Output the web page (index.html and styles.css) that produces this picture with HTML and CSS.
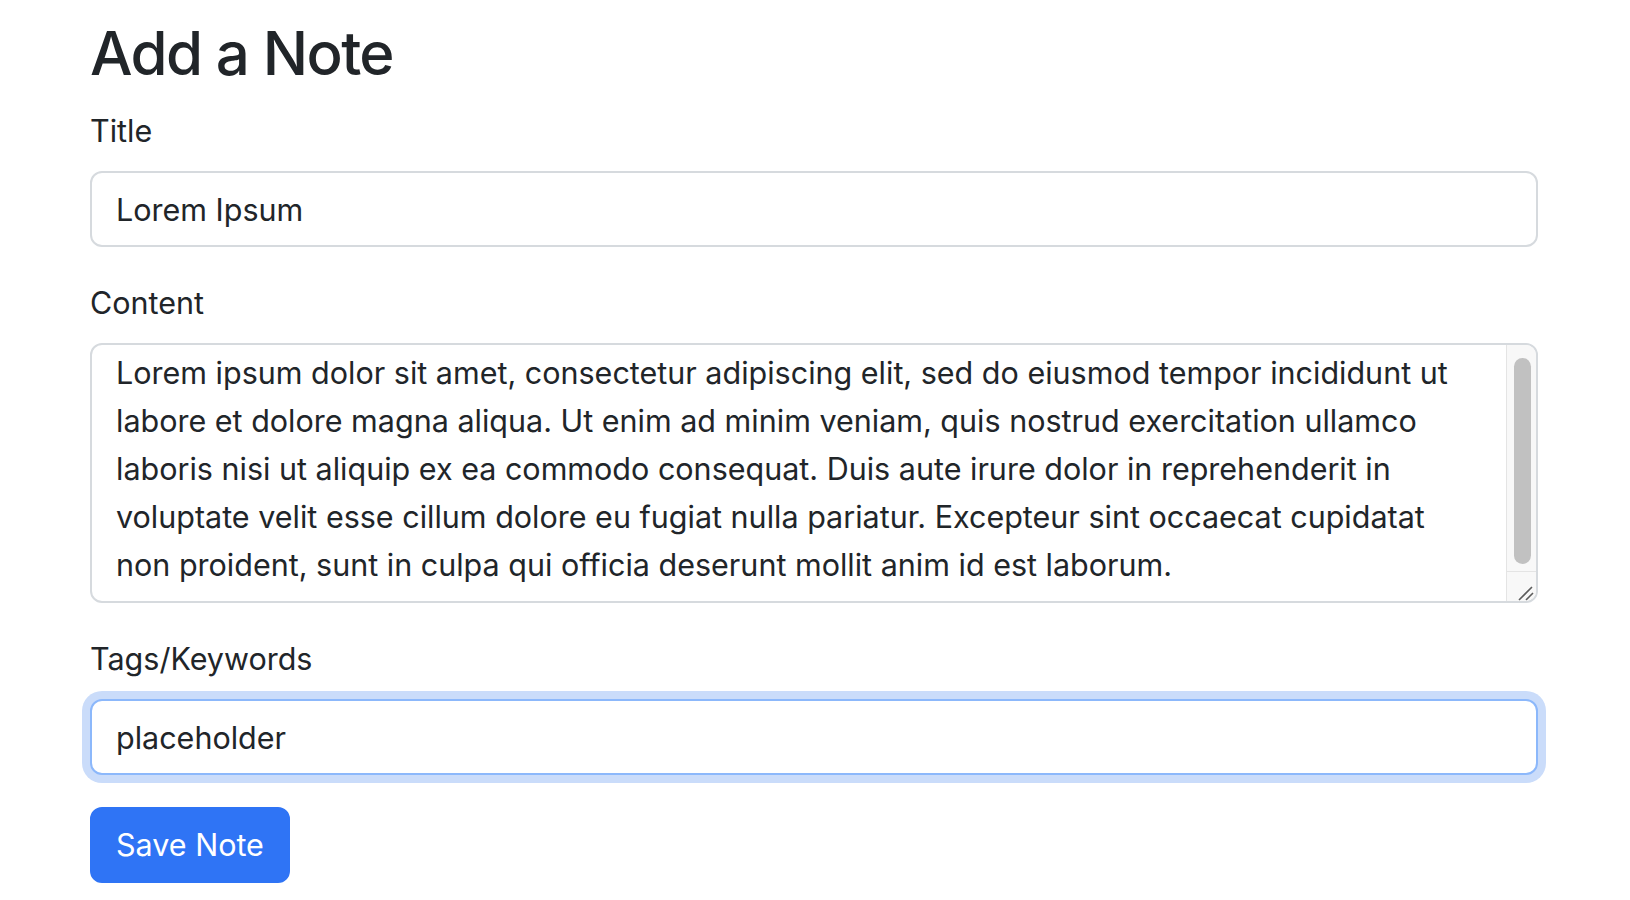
FILE: index.html
```html
<!DOCTYPE html>
<html lang="en">
<head>
<meta charset="utf-8">
<title>Add a Note</title>
<link rel="stylesheet" href="styles.css">
</head>
<body>
<main class="page">
  <h1 class="page-title">Add a Note</h1>
  <form class="note-form">
    <div class="field">
      <label class="field-label" for="title">Title</label>
      <input class="field-control" id="title" type="text" value="Lorem Ipsum">
    </div>
    <div class="field">
      <label class="field-label" for="content">Content</label>
      <div class="area-box">
        <textarea class="area-input" id="content">Lorem ipsum dolor sit amet, consectetur adipiscing elit, sed do eiusmod tempor incididunt ut labore et dolore magna aliqua. Ut enim ad minim veniam, quis nostrud exercitation ullamco laboris nisi ut aliquip ex ea commodo consequat. Duis aute irure dolor in reprehenderit in voluptate velit esse cillum dolore eu fugiat nulla pariatur. Excepteur sint occaecat cupidatat non proident, sunt in culpa qui officia deserunt mollit anim id est laborum.</textarea>
        <div class="area-scroll" aria-hidden="true">
          <div class="scroll-track"><div class="scroll-thumb"></div></div>
          <div class="scroll-resizer">
            <svg width="29" height="30" viewBox="0 0 29 30">
              <path d="M12 28 L25 15 M19 28 L26 21" stroke="#5c5c5c" stroke-width="1.6" fill="none"/>
            </svg>
          </div>
        </div>
      </div>
    </div>
    <div class="field">
      <label class="field-label" for="tags">Tags/Keywords</label>
      <input class="field-control is-focused" id="tags" type="text" value="placeholder">
    </div>
    <button class="save-button" type="button">Save Note</button>
  </form>
</main>
<script src="script.js"></script>
</body>
</html>
```

FILE: styles.css
```css
* { box-sizing: border-box; }

html, body {
  margin: 0;
  padding: 0;
  background: #ffffff;
}

body {
  font-family: Inter, "Noto Sans", "Liberation Sans", sans-serif;
  font-size: 30.5px;
  line-height: 1.5;
  color: #212529;
}

.page {
  width: 1448px;
  margin-left: 90px;
  padding-top: 16px;
}

.page-title {
  margin: 0 0 17px;
  font-size: 60px;
  font-weight: 500;
  line-height: 74px;
  letter-spacing: -1.6px;
}

.note-form {
  display: flex;
  flex-direction: column;
  align-items: flex-start;
}

.field {
  width: 100%;
  margin-bottom: 32px;
}

.field-label {
  display: block;
  margin-bottom: 16px;
  line-height: 48px;
}

.field-control {
  display: block;
  width: 100%;
  height: 76px;
  padding: 12px 24px;
  font-family: inherit;
  font-size: 30.5px;
  line-height: 48px;
  color: #212529;
  background: #ffffff;
  border: 2px solid #d6dade;
  border-radius: 12px;
  outline: none;
}

.is-focused {
  border-color: #8cb8fb;
  box-shadow: 0 0 0 8px #cadcfa;
}

.area-box {
  display: flex;
  height: 260px;
  border: 2px solid #d6dade;
  border-radius: 12px;
  overflow: hidden;
  background: #ffffff;
}

.area-input {
  flex: 1;
  min-width: 0;
  height: 100%;
  margin: 0;
  padding: 12px 24px;
  font-family: inherit;
  font-size: 30.5px;
  line-height: 48px;
  color: #212529;
  background: transparent;
  border: none;
  outline: none;
  resize: none;
  overflow: hidden;
}

.area-scroll {
  width: 30px;
  flex: none;
  display: flex;
  flex-direction: column;
  background: #f8f8f8;
  border-left: 1px solid #e4e4e4;
}

.scroll-track {
  flex: 1;
  padding: 13px 5px 7px 7px;
  display: flex;
}

.scroll-thumb {
  flex: 1;
  background: #c1c1c1;
  border-radius: 9px;
}

.scroll-resizer {
  height: 30px;
  border-top: 1px solid #e4e4e4;
}

.scroll-resizer svg {
  display: block;
}

.save-button {
  height: 76px;
  padding: 12px 24px;
  font-family: inherit;
  font-size: 30.5px;
  line-height: 48px;
  color: #ffffff;
  background: #2f74f5;
  border: 2px solid #2f74f5;
  border-radius: 12px;
}
```

FILE: script.js
```js
var area = document.getElementById('content');
area.scrollTop = area.scrollHeight;
```
